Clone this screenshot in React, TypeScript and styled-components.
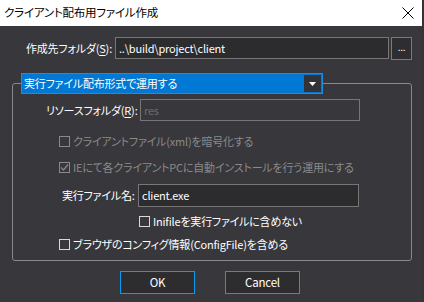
import React from 'react';
import styled, { createGlobalStyle } from 'styled-components';

const GlobalStyle = createGlobalStyle`
  html, body {
    margin: 0;
    padding: 0;
    background: #35343a;
  }
  body {
    font-family: "Noto Sans CJK JP", "Noto Sans", sans-serif;
    font-size: 11px;
    letter-spacing: -0.2px;
    font-feature-settings: "palt" 1;
  }
`;

const Window = styled.div`
  width: 422px;
  height: 302px;
  background: #38373c;
  color: #ffffff;
  display: flex;
  flex-direction: column;
  overflow: hidden;
`;

const TitleBar = styled.div`
  height: 26px;
  background: #ffffff;
  color: #000000;
  display: flex;
  align-items: center;
  justify-content: space-between;
  padding: 0 8px 0 4px;
  font-size: 11.5px;
  line-height: 1;
`;

const CloseIcon = styled.svg`
  width: 12px;
  height: 12px;
`;

const Body = styled.div`
  display: flex;
  flex-direction: column;
  padding-top: 11px;
`;

const Row = styled.div<{ $left: number; $height?: number; $mt?: number }>`
  display: flex;
  align-items: center;
  padding-left: ${(p) => p.$left}px;
  height: ${(p) => p.$height ?? 22}px;
  margin-top: ${(p) => p.$mt ?? 0}px;
`;

const Label = styled.span<{ $width: number }>`
  width: ${(p) => p.$width}px;
  flex-shrink: 0;
  white-space: nowrap;
  line-height: 1;
  u {
    text-underline-offset: 2px;
  }
`;

const TextBox = styled.div<{ $width: number; $disabled?: boolean }>`
  box-sizing: border-box;
  width: ${(p) => p.$width}px;
  height: 100%;
  border: 1px solid #767676;
  background: ${(p) => (p.$disabled ? '#38373c' : '#2c2c2f')};
  color: ${(p) => (p.$disabled ? '#6c6c6c' : '#ffffff')};
  display: flex;
  align-items: center;
  padding-left: 3px;
  white-space: nowrap;
  overflow: hidden;
  line-height: 1;
`;

const BrowseButton = styled.div`
  box-sizing: border-box;
  width: 21px;
  height: 23px;
  margin-left: 2px;
  border: 1px solid #7a7a7a;
  background: #2e2e31;
  display: flex;
  align-items: flex-end;
  justify-content: center;
  padding-bottom: 7px;
  font-size: 10px;
  line-height: 1;
`;

const Group = styled.fieldset`
  margin: 14px 0 0 12px;
  width: 400px;
  box-sizing: border-box;
  border: 1px solid #8a8a8a;
  border-radius: 3px;
  padding: 5px 0 0 0;
  height: 188px;
`;

const ModeSelect = styled.legend`
  box-sizing: border-box;
  margin-left: 8px;
  padding: 0;
  width: 302px;
  height: 21px;
  background: #0078d4;
  border: 1px solid #1a8ee6;
  display: flex;
  align-items: center;
  justify-content: space-between;
  line-height: 1;
`;

const SelectText = styled.span`
  padding-left: 2px;
`;

const ArrowBox = styled.span`
  width: 17px;
  height: 17px;
  margin-right: 1px;
  background: #333236;
  display: flex;
  align-items: center;
  justify-content: center;
`;

const CheckRow = styled.div<{ $left: number; $mt: number; $disabled?: boolean }>`
  display: flex;
  align-items: center;
  gap: 3px;
  height: 16px;
  padding-left: ${(p) => p.$left}px;
  margin-top: ${(p) => p.$mt}px;
  color: ${(p) => (p.$disabled ? '#8a8a8a' : '#ffffff')};
  line-height: 1;
  white-space: nowrap;
`;

const Box = styled.span<{ $disabled?: boolean }>`
  box-sizing: border-box;
  width: 11px;
  height: 11px;
  border: 1px solid ${(p) => (p.$disabled ? '#8a8a8a' : '#d8d8d8')};
  display: flex;
  align-items: center;
  justify-content: center;
`;

const ButtonBar = styled.div`
  display: flex;
  gap: 30px;
  padding-left: 120px;
  margin-top: 10px;
`;

const DialogButton = styled.div<{ $primary?: boolean }>`
  box-sizing: border-box;
  width: 75px;
  height: 23px;
  border: ${(p) => (p.$primary ? '1px solid #0a9af0' : '1px solid #7a7a7a')};
  background: #2d2d30;
  display: flex;
  align-items: center;
  justify-content: center;
  line-height: 1;
  font-size: 11.5px;
`;

const Check: React.FC<{ checked?: boolean; disabled?: boolean }> = ({ checked, disabled }) => (
  <Box $disabled={disabled}>
    {checked && (
      <svg width="9" height="9" viewBox="0 0 9 9">
        <path d="M1 4.5 L3.5 7 L8 1.5" fill="none" stroke={disabled ? '#8a8a8a' : '#fff'} strokeWidth="1.2" />
      </svg>
    )}
  </Box>
);

export default function App() {
  return (
    <Window>
      <GlobalStyle />
      <TitleBar>
        <span>クライアント配布用ファイル作成</span>
        <CloseIcon viewBox="0 0 12 12">
          <path d="M0.5 0.5 L11.5 11.5 M11.5 0.5 L0.5 11.5" stroke="#000" strokeWidth="1" />
        </CloseIcon>
      </TitleBar>
      <Body>
        <Row $left={26} $height={22}>
          <Label $width={89}>
            作成先フォルダ(<u>S</u>):
          </Label>
          <TextBox $width={274}>..\build\project\client</TextBox>
          <BrowseButton>...</BrowseButton>
        </Row>
        <Group>
          <ModeSelect>
            <SelectText>実行ファイル配布形式で運用する</SelectText>
            <ArrowBox>
              <svg width="7" height="4" viewBox="0 0 7 4">
                <path d="M0 0 H7 L3.5 4 Z" fill="#fff" />
              </svg>
            </ArrowBox>
          </ModeSelect>
          <Row $left={33} $height={22}>
            <Label $width={94}>
              リソースフォルダ(<u>R</u>):
            </Label>
            <TextBox $width={220} $disabled>
              res
            </TextBox>
          </Row>
          <CheckRow $left={46} $mt={12} $disabled>
            <Check disabled />
            クライアントファイル(xml)を暗号化する
          </CheckRow>
          <CheckRow $left={46} $mt={10} $disabled>
            <Check disabled checked />
            IEにて各クライアントPCに自動インストールを行う運用にする
          </CheckRow>
          <Row $left={49} $height={23} $mt={9}>
            <Label $width={76}>実行ファイル名:</Label>
            <TextBox $width={221}>client.exe</TextBox>
          </Row>
          <CheckRow $left={126} $mt={6}>
            <Check />
            Inifileを実行ファイルに含めない
          </CheckRow>
          <CheckRow $left={46} $mt={7}>
            <Check />
            ブラウザのコンフィグ情報(ConfigFile)を含める
          </CheckRow>
        </Group>
        <ButtonBar>
          <DialogButton $primary>OK</DialogButton>
          <DialogButton>Cancel</DialogButton>
        </ButtonBar>
      </Body>
    </Window>
  );
}
